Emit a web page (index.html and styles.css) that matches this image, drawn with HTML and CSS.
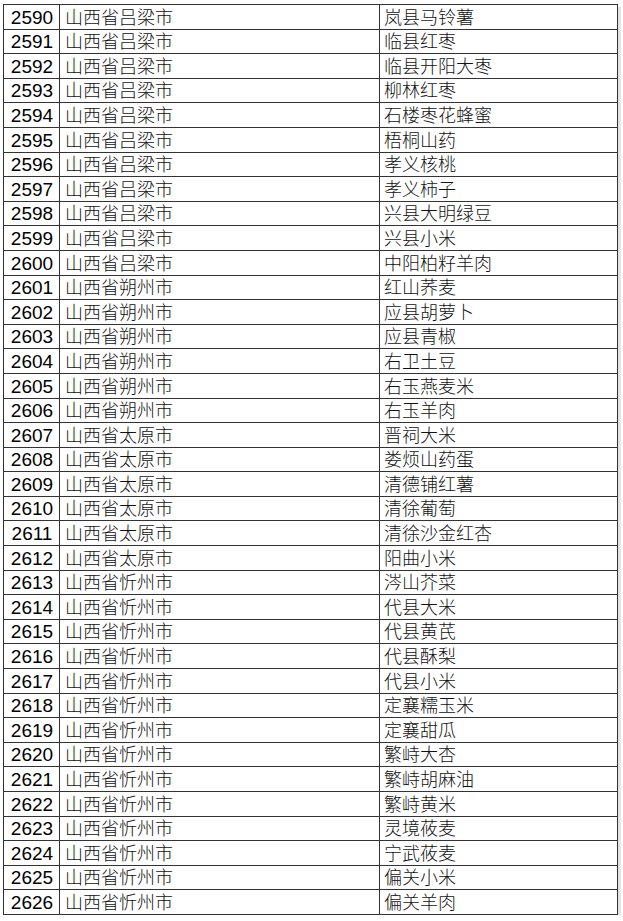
FILE: index.html
```html
<!DOCTYPE html>
<html lang="zh-CN">
<head>
<meta charset="utf-8">
<title>山西省</title>
<link rel="stylesheet" href="styles.css">
</head>
<body>
<table class="sheet">
<colgroup><col class="c-num"><col class="c-city"><col class="c-prod"></colgroup>
<tbody>
<tr><td class="num">2590</td><td class="city">山西省吕梁市</td><td class="prod">岚县马铃薯</td></tr>
<tr><td class="num">2591</td><td class="city">山西省吕梁市</td><td class="prod">临县红枣</td></tr>
<tr><td class="num">2592</td><td class="city">山西省吕梁市</td><td class="prod">临县开阳大枣</td></tr>
<tr><td class="num">2593</td><td class="city">山西省吕梁市</td><td class="prod">柳林红枣</td></tr>
<tr><td class="num">2594</td><td class="city">山西省吕梁市</td><td class="prod">石楼枣花蜂蜜</td></tr>
<tr><td class="num">2595</td><td class="city">山西省吕梁市</td><td class="prod">梧桐山药</td></tr>
<tr><td class="num">2596</td><td class="city">山西省吕梁市</td><td class="prod">孝义核桃</td></tr>
<tr><td class="num">2597</td><td class="city">山西省吕梁市</td><td class="prod">孝义柿子</td></tr>
<tr><td class="num">2598</td><td class="city">山西省吕梁市</td><td class="prod">兴县大明绿豆</td></tr>
<tr><td class="num">2599</td><td class="city">山西省吕梁市</td><td class="prod">兴县小米</td></tr>
<tr><td class="num">2600</td><td class="city">山西省吕梁市</td><td class="prod">中阳柏籽羊肉</td></tr>
<tr><td class="num">2601</td><td class="city">山西省朔州市</td><td class="prod">红山荞麦</td></tr>
<tr><td class="num">2602</td><td class="city">山西省朔州市</td><td class="prod">应县胡萝卜</td></tr>
<tr><td class="num">2603</td><td class="city">山西省朔州市</td><td class="prod">应县青椒</td></tr>
<tr><td class="num">2604</td><td class="city">山西省朔州市</td><td class="prod">右卫土豆</td></tr>
<tr><td class="num">2605</td><td class="city">山西省朔州市</td><td class="prod">右玉燕麦米</td></tr>
<tr><td class="num">2606</td><td class="city">山西省朔州市</td><td class="prod">右玉羊肉</td></tr>
<tr><td class="num">2607</td><td class="city">山西省太原市</td><td class="prod">晋祠大米</td></tr>
<tr><td class="num">2608</td><td class="city">山西省太原市</td><td class="prod">娄烦山药蛋</td></tr>
<tr><td class="num">2609</td><td class="city">山西省太原市</td><td class="prod">清德铺红薯</td></tr>
<tr><td class="num">2610</td><td class="city">山西省太原市</td><td class="prod">清徐葡萄</td></tr>
<tr><td class="num">2611</td><td class="city">山西省太原市</td><td class="prod">清徐沙金红杏</td></tr>
<tr><td class="num">2612</td><td class="city">山西省太原市</td><td class="prod">阳曲小米</td></tr>
<tr><td class="num">2613</td><td class="city">山西省忻州市</td><td class="prod">涔山芥菜</td></tr>
<tr><td class="num">2614</td><td class="city">山西省忻州市</td><td class="prod">代县大米</td></tr>
<tr><td class="num">2615</td><td class="city">山西省忻州市</td><td class="prod">代县黄芪</td></tr>
<tr><td class="num">2616</td><td class="city">山西省忻州市</td><td class="prod">代县酥梨</td></tr>
<tr><td class="num">2617</td><td class="city">山西省忻州市</td><td class="prod">代县小米</td></tr>
<tr><td class="num">2618</td><td class="city">山西省忻州市</td><td class="prod">定襄糯玉米</td></tr>
<tr><td class="num">2619</td><td class="city">山西省忻州市</td><td class="prod">定襄甜瓜</td></tr>
<tr><td class="num">2620</td><td class="city">山西省忻州市</td><td class="prod">繁峙大杏</td></tr>
<tr><td class="num">2621</td><td class="city">山西省忻州市</td><td class="prod">繁峙胡麻油</td></tr>
<tr><td class="num">2622</td><td class="city">山西省忻州市</td><td class="prod">繁峙黄米</td></tr>
<tr><td class="num">2623</td><td class="city">山西省忻州市</td><td class="prod">灵境莜麦</td></tr>
<tr><td class="num">2624</td><td class="city">山西省忻州市</td><td class="prod">宁武莜麦</td></tr>
<tr><td class="num">2625</td><td class="city">山西省忻州市</td><td class="prod">偏关小米</td></tr>
<tr><td class="num">2626</td><td class="city">山西省忻州市</td><td class="prod">偏关羊肉</td></tr>
</tbody>
</table>
</body>
</html>
```

FILE: styles.css
```css
html, body {
  margin: 0;
  padding: 0;
  background: #ffffff;
}

body {
  padding: 4px 0 0 3px;
}

.sheet {
  border-collapse: collapse;
  table-layout: fixed;
  width: 614px;
  font-family: "Liberation Sans", "Noto Sans CJK SC", sans-serif;
  font-size: 18px;
  color: #111;
  box-shadow: 3px 3px 0 #e4e4e4;
}

.c-num { width: 56px; }
.c-city { width: 320px; }
.c-prod { width: 238px; }

.sheet tr {
  height: 24.6px;
}

.sheet td {
  border: 1px solid #333;
  padding: 0 0 1px 0;
  line-height: 20px;
  vertical-align: bottom;
  white-space: nowrap;
  overflow: hidden;
}

.sheet td.num {
  text-align: center;
  padding-left: 1px;
  font-size: 19px;
  color: #000;
}

.sheet td.city {
  padding-left: 5px;
  font-weight: 300;
}

.sheet td.prod {
  padding-left: 4px;
  font-weight: 300;
}
```
